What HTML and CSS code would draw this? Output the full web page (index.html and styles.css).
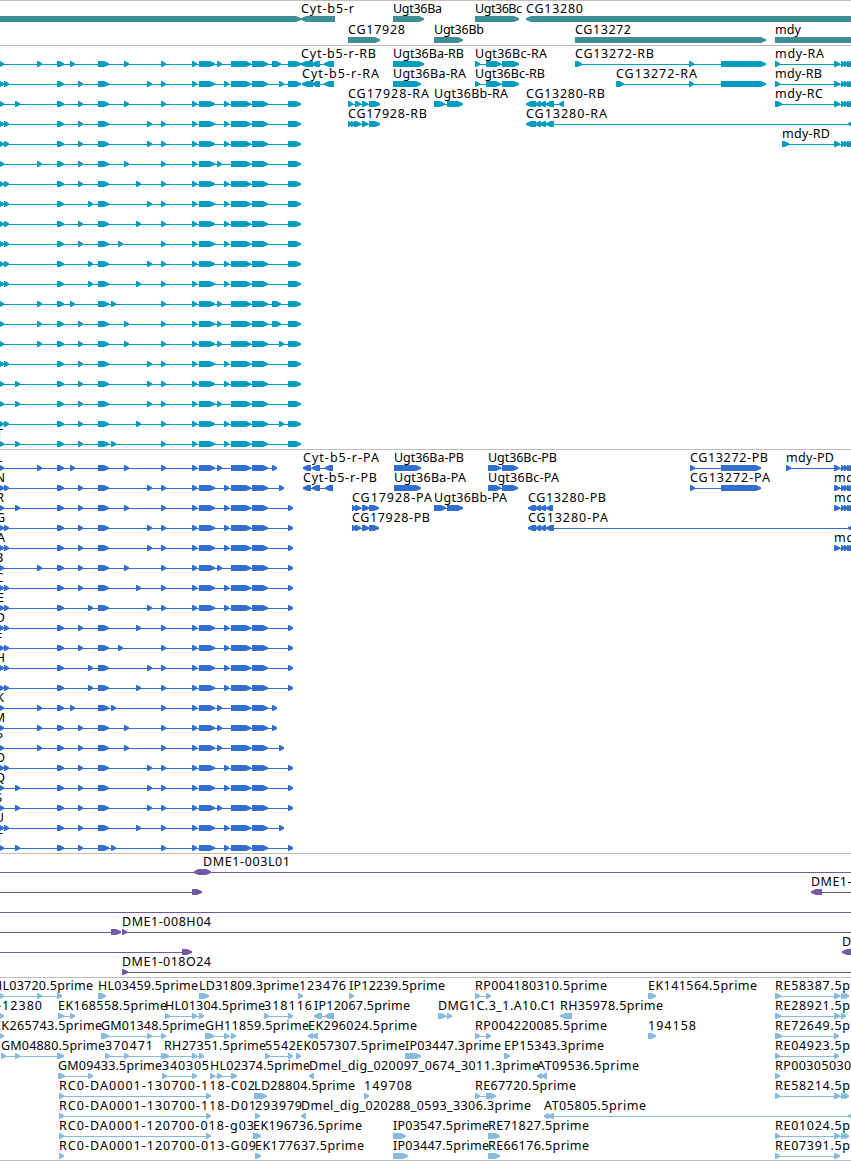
FILE: index.html
```html
<!DOCTYPE html>
<html lang="en">
<head>
    <meta charset="UTF-8">
    <meta name="viewport" content="width=device-width, initial-scale=1.0">
    <title>Genome Browser</title>
    <link rel="stylesheet" href="styles.css">
</head>
<body>

    <div class="browser">
        <div class="track genes" id="genes"></div>
        <div class="track transcripts" id="transcripts"></div>
        <div class="track proteins" id="proteins"></div>
        <div class="track clones" id="clones"></div>
        <div class="track ests" id="ests"></div>
    </div>

    <script src="tracks.js"></script>

</body>
</html>
```

FILE: styles.css
```css
body {
    margin: 0;
    background-color: #fff;
    font-family: "Noto Sans", "DejaVu Sans", sans-serif;
}
.browser {
    width: 851px;
    overflow: hidden;
    border-bottom: 1px solid #bebebe;
}
.track {
    border-top: 1px solid #bebebe;
    padding-bottom: 3px;
}
.row {
    display: block;
    width: 851px;
    height: 20px;
    overflow: visible;
}
.label {
    font-size: 12.5px;
    fill: #000;
}
.genes {
    color: #3f8e95;
    padding-bottom: 2px;
}
.genes .row {
    height: 21px;
}
.transcripts {
    color: #009dbf;
}
.proteins {
    color: #326ecd;
}
.clones {
    color: #7358a8;
}
.ests {
    color: #87bbdd;
    padding-bottom: 2px;
}
.feature {
    fill: currentColor;
}
```

FILE: tracks.js
```javascript
const SVG = 'http://www.w3.org/2000/svg';

// exons shared by the isoforms of the long gene on the left
const EXONS = {
    4: [4, 9], 15: [15, 20], 37: [37, 42], 57: [57, 64], 70: [70, 75], 78: [78, 83],
    88: [88, 93], 98: [98, 109], 111: [111, 116], 118: [118, 123], 124: [124, 129],
    136: [136, 141], 147: [147, 152], 161: [161, 166], 192: [192, 197], 199: [199, 215],
    217: [217, 222], 224: [224, 229], 231: [231, 251], 252: [252, 268]
};

// first exon, second exon, variable exon, middle exon, late exon, optional last one
const ISOFORMS = [
    [37, 70, 124, 217, 272],
    [4, 78, 147, 224, 279],
    [15, 78, 124, 224],
    [4, 78, 147, 224],
    [4, 78, 147, 224],
    [37, 78, 124, 217],
    [4, 78, 136, 224],
    [4, 88, 147, 224],
    [4, 78, 136, 224],
    [4, 78, 118, 224],
    [4, 88, 147, 224],
    [4, 88, 136, 224],
    [37, 70, 111, 217, 272],
    [37, 78, 124, 217, 272],
    [37, 78, 124, 217, 279],
    [4, 78, 147, 224],
    [15, 78, 147, 224],
    [15, 78, 147, 217],
    [4, 78, 136, 224, 279],
    [15, 78, 111, 224]
];

function isoform(row, coding) {
    const [first, second, variable, middle, last] = row;
    const spans = [[-1, 4]];
    [first, 57, second, 98, variable, 161, 192, 199, middle, 231, 252].forEach(function(key) {
        spans.push(EXONS[key]);
    });
    if (last) {
        spans.push([last, last === 272 && !coding ? 281 : last + 5]);
    }
    if (!coding) {
        spans.push([288, 301]);
    } else if (!last) {
        spans.push([288, 293]);
    }
    return ['', 0, 0, '>', spans];
}

const MDY = [[834, 840], [841, 845], [844, 848], [847, 852], [850, 856]];
const RE_END = [[834, 840], [841, 845], [844, 849]];
const BC = [[475, 480], [486, 501], [502, 519]];
const L13280 = [[535, 541], [540, 546], [546, 554]];
const CYT = [[303, 311], [312, 320], [325, 333]];

// feature: [label, label start, label end, strand, spans]
const genes = [
    [
        ['', 0, 0, '>', [[-8, 301]]],
        ['Cyt-b5-r', 301, 354, '<', [[301, 335]]],
        ['Ugt36Ba', 393, 442, '>', [[393, 424]]],
        ['Ugt36Bc', 475, 522, '>', [[475, 519]]],
        ['CG13280', 526, 583, '<', [[526, 870]]]
    ],
    [
        ['CG17928', 348, 405, '>', [[348, 380]]],
        ['Ugt36Bb', 434, 484, '>', [[434, 463]]],
        ['CG13272', 575, 631, '>', [[575, 766]]],
        ['mdy', 775, 801, '>', [[775, 870]]]
    ]
];

const transcriptExtras = [
    [
        ['Cyt-b5-r-RB', 301, 376, '<', [[301, 313], [312, 320], [324, 334]]],
        ['Ugt36Ba-RB', 393, 464, '>', [[393, 424]]],
        ['Ugt36Bc-RA', 475, 547, '>', BC],
        ['CG13272-RB', 575, 654, '>', [[575, 582], [689, 694], [721, 766]]],
        ['mdy-RA', 775, 824, '>', [[775, 780], ...MDY]]
    ],
    [
        ['Cyt-b5-r-RA', 302, 379, '<', [[302, 313], [312, 320], [324, 334]]],
        ['Ugt36Ba-RA', 393, 466, '>', [[393, 421]]],
        ['Ugt36Bc-RB', 475, 545, '>', BC],
        ['CG13272-RA', 616, 697, '>', [[616, 624], [689, 694], [721, 766]]],
        ['mdy-RB', 775, 822, '>', [[775, 780], ...MDY]]
    ],
    [
        ['CG17928-RA', 348, 429, '>', [[348, 353], [355, 361], [362, 368], [369, 380]]],
        ['Ugt36Bb-RA', 434, 508, '>', [[434, 445], [447, 463]]],
        ['CG13280-RB', 526, 605, '<', [[526, 536], ...L13280, [559, 564]]],
        ['mdy-RC', 775, 823, '>', [[775, 782], ...MDY]]
    ],
    [
        ['CG17928-RB', 348, 427, '>', [[348, 352], [351, 355], [354, 361], [362, 368], [369, 380]]],
        ['CG13280-RA', 526, 607, '<', [[526, 536], ...L13280, [848, 856]]]
    ],
    [
        ['mdy-RD', 782, 830, '>', [[782, 789], ...MDY]]
    ]
];

const proteinExtras = [
    [
        ['Cyt-b5-r-PA', 303, 379, '<', CYT],
        ['Ugt36Ba-PB', 394, 464, '>', [[394, 421]]],
        ['Ugt36Bc-PB', 488, 557, '>', [[488, 501], [502, 518]]],
        ['CG13272-PB', 690, 768, '>', [[690, 695], [721, 761]]],
        ['mdy-PD', 786, 834, '>', [[786, 791], ...MDY]]
    ],
    [
        ['Cyt-b5-r-PB', 303, 377, '<', CYT],
        ['Ugt36Ba-PA', 394, 466, '>', [[394, 421]]],
        ['Ugt36Bc-PA', 488, 559, '>', [[488, 501], [502, 518]]],
        ['CG13272-PA', 690, 770, '>', [[690, 695], [721, 761]]],
        ['mdy-PB', 834, 882, '>', MDY]
    ],
    [
        ['CG17928-PA', 352, 432, '>', [[352, 356], [355, 361], [362, 369], [369, 379]]],
        ['Ugt36Bb-PA', 434, 507, '>', [[434, 446], [447, 463]]],
        ['CG13280-PB', 528, 606, '<', [[528, 536], [535, 541], [540, 546], [546, 553]]],
        ['mdy-PC', 834, 882, '>', MDY]
    ],
    [
        ['CG17928-PB', 352, 430, '>', [[352, 356], [355, 361], [362, 369], [369, 379]]],
        ['CG13280-PA', 528, 608, '<', [[528, 536], ...L13280, [848, 856]]]
    ],
    [
        ['mdy-PA', 834, 883, '>', MDY]
    ]
];

// last letters of the labels that start left of the view, with their right edge
const transcriptTails = { 19: ['T', 2.6] };
const proteinTails = [
    ['L', 2], ['N', 5], ['R', 4], ['G', 5], ['A', 5], ['B', 3.5], ['C', 3.5], ['E', 4], ['D', 5], ['F', 2],
    ['H', 5], null, ['K', 4], ['M', 5], ['P', 3], ['O', 5], ['Q', 5], ['S', 2], ['U', 4], ['T', 2.6]
];

const clones = [
    [
        ['', 0, 0, '<', [[194, 203], [870, 880]]],
        ['DME1-003L01', 203, 290, '>', [[-20, -10], [201, 211]]]
    ],
    [
        ['', 0, 0, '>', [[-20, -10], [192, 202]]],
        ['DME1-021B17', 811, 898, '<', [[811, 822], [870, 880]]]
    ],
    [
        ['', 0, 0, '>', [[-20, -10], [870, 880]]]
    ],
    [
        ['', 0, 0, '>', [[-20, -10], [111, 121]]],
        ['DME1-008H04', 122, 211, '>', [[122, 127], [870, 880]]]
    ],
    [
        ['', 0, 0, '>', [[-20, -10], [182, 192]]],
        ['DME1-014K09', 842, 930, '<', [[842, 853], [870, 880]]]
    ],
    [
        ['DME1-018O24', 122, 211, '>', [[122, 128], [870, 880]]]
    ]
];

const ests = [
    [
        ['HL03720.5prime', -7, 93, '>', [[-1, 4], [37, 42], [57, 62]]],
        ['HL03459.5prime', 98, 198, '>', [[98, 106]]],
        ['LD31809.3prime', 199, 299, '>', [[199, 209]]],
        ['123476', 299, 346, '>', [[298, 303]]],
        ['IP12239.5prime', 349, 445, '>', [[349, 354]]],
        ['RP004180310.5prime', 475, 607, '>', [[475, 480], [486, 491]]],
        ['EK141564.5prime', 648, 757, '>', [[648, 656]]],
        ['RE58387.5prime', 775, 880, '>', [[775, 781], ...RE_END]]
    ],
    [
        ['-12380', -3, 42, '>', [[-1, 4]]],
        ['EK168558.5prime', 58, 167, '>', [[58, 64], [70, 75]]],
        ['HL01304.5prime', 165, 265, '>', [[165, 170], [192, 197], [199, 204]]],
        ['318116', 264, 312, '>', [[264, 269], [288, 293]]],
        ['IP12067.5prime', 314, 410, '<', [[314, 322], [325, 334]]],
        ['DMG1C.3_1.A10.C1', 438, 556, '>', [[438, 446], [447, 452]]],
        ['RH35978.5prime', 560, 663, '<', [[560, 572]]],
        ['RE28921.5prime', 775, 880, '>', [[775, 781], [834, 840], [841, 846]]]
    ],
    [
        ['EK265743.5prime', -6, 102, '>', [[-1, 4]]],
        ['GM01348.5prime', 101, 205, '>', [[101, 109], [147, 152], [161, 166]]],
        ['GH11859.5prime', 205, 309, '>', [[205, 214], [224, 229], [231, 236]]],
        ['EK296024.5prime', 308, 417, '<', [[308, 313], [312, 318]]],
        ['RP004220085.5prime', 475, 607, '>', [[475, 480], [486, 491]]],
        ['194158', 648, 696, '>', [[648, 656]]],
        ['RE72649.5prime', 775, 880, '>', [[775, 782], [834, 839]]]
    ],
    [
        ['GM04880.5prime', 1, 105, '>', [[1, 6], [15, 20], [57, 64]]],
        ['370471', 105, 153, '>', [[105, 110], [124, 129], [161, 166]]],
        ['RH27351.5prime', 164, 266, '>', [[164, 169], [192, 197], [199, 204]]],
        ['5542', 265, 296, '>', [[265, 270], [288, 293]]],
        ['EK057307.5prime', 296, 405, '>', [[296, 301]]],
        ['IP03447.3prime', 405, 501, '>', [[405, 421]]],
        ['EP15343.3prime', 504, 604, '>', [[504, 510]]],
        ['RE04923.5prime', 775, 880, '>', [[775, 780], [834, 839]]]
    ],
    [
        ['GM09433.5prime', 58, 162, '>', [[58, 65], [88, 93]]],
        ['340305', 162, 209, '>', [[162, 167], [192, 197]]],
        ['HL02374.5prime', 210, 310, '>', [[210, 215], [217, 222], [231, 237]]],
        ['Dmel_dig_020097_0674_3011.3prime', 309, 539, '<', [[309, 314]]],
        ['AT09536.5prime', 537, 639, '<', [[537, 542], [541, 547]]],
        ['RP003050300.5prime', 775, 907, '>', [[775, 780]]]
    ],
    [
        ['RC0-DA0001-130700-118-C02', 59, 255, '>', [[59, 64], [206, 211]]],
        ['LD28804.5prime', 254, 355, '>', [[254, 267]]],
        ['149708', 364, 412, '>', [[364, 369]]],
        ['RE67720.5prime', 475, 576, '>', [[475, 480], [486, 496]]],
        ['RE58214.5prime', 775, 880, '>', [[775, 780], ...RE_END]]
    ],
    [
        ['RC0-DA0001-130700-118-D01', 59, 256, '>', [[59, 64], [206, 211]]],
        ['293979', 255, 302, '>', [[255, 260]]],
        ['Dmel_dig_020288_0593_3306.3prime', 301, 531, '<', [[301, 306]]],
        ['AT05805.5prime', 544, 646, '<', [[544, 549], [548, 554], [848, 856]]]
    ],
    [
        ['RC0-DA0001-120700-018-g03', 59, 254, '>', [[59, 64], [206, 211]]],
        ['EK196736.5prime', 253, 362, '>', [[253, 261]]],
        ['IP03547.5prime', 393, 489, '>', [[393, 406]]],
        ['RE71827.5prime', 488, 589, '>', [[488, 500]]],
        ['RE01024.5prime', 775, 880, '>', [[775, 780], ...RE_END]]
    ],
    [
        ['RC0-DA0001-120700-013-G09', 59, 256, '>', [[59, 64]]],
        ['EK177637.5prime', 255, 364, '>', [[255, 261]]],
        ['IP03447.5prime', 393, 489, '>', [[393, 408]]],
        ['RE66176.5prime', 488, 589, '>', [[488, 500]]],
        ['RE07391.5prime', 775, 880, '>', [[775, 780], [834, 840]]]
    ]
];

function make(name, attrs, parent) {
    const el = document.createElementNS(SVG, name);
    for (const key in attrs) {
        el.setAttribute(key, attrs[key]);
    }
    parent.appendChild(el);
    return el;
}

function arrow(start, end, strand, y) {
    const width = end - start;
    const dir = strand === '>' ? 1 : -1;
    const tip = dir > 0 ? end : start;
    const back = dir > 0 ? start : end;
    // short spans are almost all head, with a one pixel stem behind it
    const neck = tip - dir * (width > 9 ? 5 : Math.min(width - 1, 4.5));
    return `M${back},${y} H${neck} L${tip},${y + 2.3} V${y + 4} L${neck},${y + 6} H${back} Z`;
}

function addText(svg, text, attrs) {
    attrs.class = 'label';
    make('text', attrs, svg).textContent = text;
}

function drawTrack(id, rows, tails) {
    const track = document.getElementById(id);
    const y = 15;
    rows.forEach(function(features, index) {
        const svg = make('svg', { class: 'row' }, track);
        features.forEach(function([label, from, to, strand, spans]) {
            const first = spans[0][0];
            const last = spans[spans.length - 1][1];
            if (spans.length > 1) {
                make('rect', { class: 'feature', x: first + 1, y: y + 3, width: last - first - 2, height: 1 }, svg);
            }
            const d = spans.map(([s, e]) => arrow(s, e, strand, y)).join(' ');
            make('path', { class: 'feature', d: d }, svg);
            if (label) {
                addText(svg, label, { x: from, y: 12, textLength: to - from });
            }
        });
        if (tails && tails[index]) {
            const [letter, edge] = tails[index];
            addText(svg, letter, { x: edge, y: 12, 'text-anchor': 'end' });
        }
    });
}

function withIsoforms(extras, coding) {
    return ISOFORMS.map((row, i) => [isoform(row, coding), ...(extras[i] || [])]);
}

drawTrack('genes', genes);
drawTrack('transcripts', withIsoforms(transcriptExtras, false), transcriptTails);
drawTrack('proteins', withIsoforms(proteinExtras, true), proteinTails);
drawTrack('clones', clones);
drawTrack('ests', ests);
```
